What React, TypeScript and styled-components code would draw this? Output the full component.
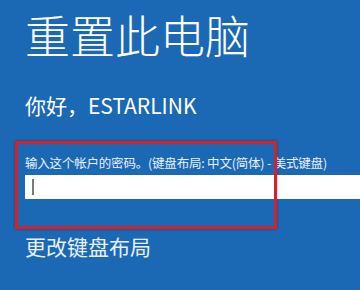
import React from 'react'
import styled, { createGlobalStyle } from 'styled-components'

const GlobalStyle = createGlobalStyle`
	html, body {
		margin: 0;
		padding: 0;
		background: #1b69b5;
	}
	body {
		font-family: "Noto Sans CJK SC", "Noto Sans", sans-serif;
		color: #ffffff;
	}
`

const Screen = styled.div`
	width: 360px;
	height: 290px;
	overflow: hidden;
	box-sizing: border-box;
	background: #1b69b5;
	display: flex;
	flex-direction: column;
	padding: 8px 0 0 25px;
`

const Title = styled.h1`
	margin: 0;
	font-size: 45px;
	line-height: 54px;
	font-weight: 300;
	letter-spacing: 0;
`

const Greeting = styled.div`
	margin-top: 30px;
	font-size: 21px;
	line-height: 26px;
	font-weight: 400;
`

const Field = styled.div`
	position: relative;
	margin-top: 38px;
	display: flex;
	flex-direction: column;
`

const Label = styled.div`
	font-size: 12.5px;
	line-height: 14px;
	color: #e8f0fa;
	white-space: nowrap;
	letter-spacing: -0.2px;
`

const PasswordBox = styled.div`
	margin-top: 5px;
	height: 24px;
	background: #ffffff;
	display: flex;
	align-items: center;
	padding-left: 7px;
`

const Caret = styled.span`
	width: 2px;
	height: 16px;
	background: #7a7a7a;
`

/* annotation drawn over the screenshot */
const Highlight = styled.div`
	position: absolute;
	left: -10px;
	top: -15px;
	width: 262px;
	height: 88px;
	box-sizing: border-box;
	border: 3px solid #d8202a;
	box-shadow: 0 0 3px rgba(0, 0, 0, 0.35);
	pointer-events: none;
`

const LinkText = styled.div`
	margin-top: 34px;
	font-size: 21px;
	line-height: 26px;
	color: #e8f0fa;
`

const App = () => {
	return (
		<>
			<GlobalStyle />
			<Screen>
				<Title>重置此电脑</Title>
				<Greeting>你好，ESTARLINK</Greeting>
				<Field>
					<Label>输入这个帐户的密码。(键盘布局: 中文(简体) - 美式键盘)</Label>
					<PasswordBox>
						<Caret />
					</PasswordBox>
					<Highlight />
				</Field>
				<LinkText>更改键盘布局</LinkText>
			</Screen>
		</>
	)
}

export default App
